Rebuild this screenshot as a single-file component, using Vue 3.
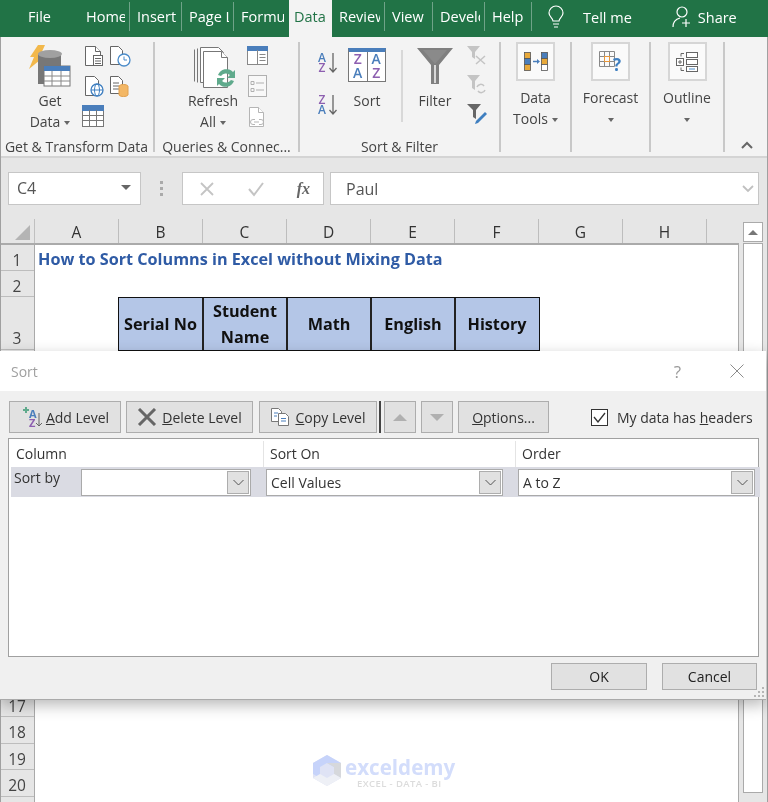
<script setup>
const tabs = [
  { label: 'File', width: 78, center: true },
  { label: 'Home', width: 52, sep: true },
  { label: 'Insert', width: 52, sep: true },
  { label: 'Page Layout', width: 52, sep: true },
  { label: 'Formulas', width: 55 },
  { label: 'Data', width: 43, active: true },
  { label: 'Review', width: 53, sep: true },
  { label: 'View', width: 48, sep: true },
  { label: 'Developer', width: 52, sep: true },
  { label: 'Help', width: 47, sep: true }
]
const columns = ['A', 'B', 'C', 'D', 'E', 'F', 'G', 'H']
const rows = Array.from({ length: 21 }, (_, i) => i + 1)
const headers = ['Serial No', 'Student Name', 'Math', 'English', 'History']
</script>

<template>
  <div class="excel">
    <!-- вкладки -->
    <div class="tabs">
      <div
        v-for="tab in tabs"
        :key="tab.label"
        class="tab"
        :class="{ active: tab.active, sep: tab.sep }"
        :style="{ width: tab.width + 'px' }"
      >
        <span>{{ tab.label }}</span>
      </div>
      <div class="tell">
        <svg width="16" height="24" viewBox="0 0 16 24" fill="none" stroke="#fff" stroke-width="1.2">
          <path d="M5 16c0-3-4-4-4-8a7 7 0 0 1 14 0c0 4-4 5-4 8z" />
          <path d="M5 19h6M6 22h4" />
        </svg>
        <span>Tell me</span>
      </div>
      <div class="share">
        <svg width="20" height="24" viewBox="0 0 20 24" fill="none" stroke="#fff" stroke-width="1.2">
          <circle cx="10" cy="7" r="5" />
          <path d="M1 22c0-5 3-8 7-9M14 14v8M10 18h8" />
        </svg>
        <span>Share</span>
      </div>
    </div>

    <!-- лента -->
    <div class="ribbon">
      <div class="group" style="width: 155px">
        <div class="group-body">
          <div class="big get-data">
            <svg width="46" height="46" viewBox="0 0 46 46">
              <path d="M12 1h7l-5 11h5L3 25l5-12H4z" fill="#f2b84b" />
              <path d="M12 10c3-3 20-3 23 0v30H12z" fill="#777" />
              <ellipse cx="24" cy="10" rx="12" ry="4" fill="#a0a0a0" />
              <rect x="18" y="22" width="26" height="20" fill="#fff" stroke="#777" />
              <rect x="18" y="22" width="26" height="5" fill="#4a7ebb" />
              <path d="M18 32h26M18 37h26M26 27v15M35 27v15" stroke="#888" fill="none" />
            </svg>
            <div class="big-text">Get</div>
            <div class="big-text">Data<i class="caret"></i></div>
          </div>
          <div class="small-grid first">
            <svg width="20" height="22" viewBox="0 0 20 22" fill="#fff" stroke="#666">
              <path d="M1.500 1.500h10l5 5v14h-15z" /><path d="M11.500 1.500v5h5" /><rect x="9.500" y="10.500" width="9" height="10" /><path d="M11 13.500h6M11 16h6M11 18.500h6" />
            </svg>
            <svg width="23" height="22" viewBox="0 0 23 22" fill="#fff" stroke="#666">
              <path d="M1.500 1.500h8l4 4v14h-12z" /><circle cx="15" cy="15" r="6" stroke="#4a8bc9" stroke-width="1.300" /><path d="M15 11.500V15h3" stroke="#4a8bc9" fill="none" />
            </svg>
            <svg width="20" height="22" viewBox="0 0 20 22" fill="#fff" stroke="#666">
              <path d="M1.500 1.500h9l4 4v15h-13z" /><circle cx="13" cy="15" r="6" stroke="#3f7fc0" stroke-width="1.300" /><ellipse cx="13" cy="15" rx="2.500" ry="6" stroke="#3f7fc0" fill="none" /><path d="M7 15h12" stroke="#3f7fc0" />
            </svg>
            <svg width="20" height="22" viewBox="0 0 20 22" fill="#fff" stroke="#666">
              <path d="M1.500 1.500h8l4 4v13h-12z" /><path d="M4 8h6M4 11h6M4 14h6" /><path d="M10 11c1-2 8-2 9 0v9c-1 2-8 2-9 0z" fill="#f3b765" stroke="#e0a050" />
            </svg>
            <svg class="wide-table" width="22" height="22" viewBox="0 0 22 22" fill="#fff" stroke="#777">
              <rect x=".5" y=".5" width="21" height="21" /><rect x=".5" y=".5" width="21" height="5" fill="#4a7ebb" stroke="#4a7ebb" /><path d="M.5 10.500h21M.5 15.500h21M7.500 5v17M14.500 5v17" fill="none" />
            </svg>
          </div>
        </div>
        <div class="group-label">Get &amp; Transform Data</div>
      </div>

      <div class="group" style="width: 145px">
        <div class="group-body">
          <div class="big refresh">
            <svg width="44" height="46" viewBox="0 0 44 46" fill="#fff" stroke="#777">
              <path d="M1.500 3.500v32M4.500 2.500v34" fill="none" />
              <path d="M7.500 1.500h18l5 5v30h-23z" />
              <path d="M10.500 5.500h18l6 6v30h-24z" />
              <path d="M28.500 5.500v6h6" />
              <path d="M25 29a9 9 0 0 1 15-3l2-2v8h-8l3-3a6 6 0 0 0-9 1zM41 35a9 9 0 0 1-15 3l-2 2v-8h8l-3 3a6 6 0 0 0 9-1z" fill="#5faa8c" stroke="none" />
            </svg>
            <div class="big-text">Refresh</div>
            <div class="big-text">All<i class="caret"></i></div>
          </div>
          <div class="small-col">
            <svg width="21" height="20" viewBox="0 0 21 20" fill="#fff" stroke="#888">
              <rect x=".5" y=".5" width="20" height="18" /><rect x=".5" y=".5" width="20" height="4" fill="#4a7ebb" stroke="#4a7ebb" /><path d="M12.500 8.500h6M12.500 11.500h6M12.500 14.500h6M10.500 4v15" fill="none" />
            </svg>
            <svg width="19" height="22" viewBox="0 0 19 22" fill="#f8f8f8" stroke="#b0b0b0">
              <rect x=".5" y=".5" width="18" height="21" /><path d="M3 6.500h3v3H3zM3 13.500h3v3H3zM8 8h8M8 15h8" />
            </svg>
            <svg width="19" height="22" viewBox="0 0 19 22" fill="#fff" stroke="#b5b5b5">
              <path d="M1.500 1.500h9l5 5v14h-14z" /><path d="M10.500 1.500v5h5" /><path d="M6 16h5M7 13.500H5a2.500 2.500 0 0 0 0 5h2M11 13.500h2a2.500 2.500 0 0 1 0 5h-2" fill="none" />
            </svg>
          </div>
        </div>
        <div class="group-label">Queries &amp; Connec...</div>
      </div>

      <div class="group" style="width: 201px">
        <div class="group-body sort-body">
          <div class="sort-small">
            <div class="az">
              <div class="az-letters"><span class="blue">A</span><span class="purple">Z</span></div>
              <svg width="8" height="20" viewBox="0 0 8 20" fill="none" stroke="#666" stroke-width="1.300">
                <path d="M4 0v19M.5 15L4 19l3.500-4" />
              </svg>
            </div>
            <div class="az">
              <div class="az-letters"><span class="purple">Z</span><span class="blue">A</span></div>
              <svg width="8" height="20" viewBox="0 0 8 20" fill="none" stroke="#666" stroke-width="1.300">
                <path d="M4 0v19M.5 15L4 19l3.500-4" />
              </svg>
            </div>
          </div>
          <div class="big sort-big">
            <div class="sort-icon">
              <div class="sort-cell"><span class="purple">Z</span><span class="blue">A</span></div>
              <div class="sort-cell"><span class="blue">A</span><span class="purple">Z</span></div>
            </div>
            <div class="big-text">Sort</div>
          </div>
          <div class="inner-sep"></div>
          <div class="big filter-big">
            <svg width="36" height="38" viewBox="0 0 36 38">
              <path d="M0 1h36L22 18v19h-8V18z" fill="#7f7f7f" />
              <path d="M17 18h2v18h-2z" fill="#d8d8d8" />
              <path d="M6 3h24L18 17z" fill="#8a8a8a" />
            </svg>
            <div class="big-text">Filter</div>
          </div>
          <div class="small-col filter-col">
            <svg width="20" height="20" viewBox="0 0 20 20">
              <path d="M0 0h13L8 6v7L5 11V6z" fill="#c4c4c4" /><path d="M9 10l9 8M18 10l-9 8" stroke="#c4c4c4" stroke-width="1.500" />
            </svg>
            <svg width="20" height="20" viewBox="0 0 20 20">
              <path d="M0 0h13L8 6v9L5 13V6z" fill="#c4c4c4" /><path d="M10 12a4 4 0 0 1 7-1M18 15a4 4 0 0 1-7 1" stroke="#c4c4c4" stroke-width="1.500" fill="none" />
            </svg>
            <svg width="20" height="20" viewBox="0 0 20 20">
              <path d="M0 0h14L9 6v9L6 13V6z" fill="#666" /><path d="M18 8l2 2-9 9-3 1 1-3z" fill="#3f7fc0" />
            </svg>
          </div>
        </div>
        <div class="group-label">Sort &amp; Filter</div>
      </div>

      <div class="group" style="width: 71px">
        <div class="boxed">
          <div class="icon-box">
            <svg width="24" height="20" viewBox="0 0 24 20" stroke="#555" stroke-width=".8">
              <rect x=".5" y=".5" width="6" height="6" fill="#e8a93a" /><rect x=".5" y="6.500" width="6" height="6" fill="#4a7ebb" /><rect x=".5" y="12.500" width="6" height="6" fill="#e8a93a" />
              <rect x="17.500" y=".5" width="6" height="6" fill="#4a7ebb" /><rect x="17.500" y="6.500" width="6" height="6" fill="#e8a93a" /><rect x="17.500" y="12.500" width="6" height="6" fill="#fff" />
              <path d="M9 9.500h5" stroke="#4a7ebb" stroke-width="1.500" /><path d="M13 7l3 2.500-3 2.500z" fill="#4a7ebb" stroke="none" />
            </svg>
          </div>
          <div class="big-text">Data</div>
          <div class="big-text">Tools<i class="caret"></i></div>
        </div>
      </div>

      <div class="group" style="width: 79px">
        <div class="boxed">
          <div class="icon-box">
            <svg width="24" height="22" viewBox="0 0 24 22" fill="none">
              <path d="M.5.500h15v15H.5zM5.500.5v15M10.500.5v15M.5 5.500h15M.5 10.500h15" stroke="#888" />
              <rect x="5.500" y="5.500" width="5" height="5" stroke="#e8973a" />
              <text x="14" y="20" class="q-mark">?</text>
            </svg>
          </div>
          <div class="big-text">Forecast</div>
          <div class="big-text"><i class="caret alone"></i></div>
        </div>
      </div>

      <div class="group" style="width: 74px">
        <div class="boxed">
          <div class="icon-box">
            <svg width="22" height="20" viewBox="0 0 22 20" fill="#fff" stroke="#666">
              <rect x=".5" y="6.500" width="7" height="7" /><path d="M2 10h4M4 8v4" /><path d="M8 1.500H5v3M8 18.500H5v-3" fill="none" />
              <rect x="10.500" y=".5" width="11" height="5" /><rect x="10.500" y="7.500" width="11" height="5" /><rect x="10.500" y="14.500" width="11" height="5" /><path d="M13 17h6" stroke="#4a8bc9" />
            </svg>
          </div>
          <div class="big-text">Outline</div>
          <div class="big-text"><i class="caret alone"></i></div>
        </div>
      </div>

      <div class="collapse">
        <svg width="12" height="8" viewBox="0 0 12 8" fill="none" stroke="#666" stroke-width="2">
          <path d="M1 7l5-5 5 5" />
        </svg>
      </div>
    </div>

    <!-- строка формул -->
    <div class="formula-row">
      <div class="name-box">
        <span>C4</span>
        <i class="caret dark"></i>
      </div>
      <div class="dots"><i></i><i></i><i></i></div>
      <div class="fx-box">
        <svg width="16" height="16" viewBox="0 0 16 16" fill="none" stroke="#c4c4c4" stroke-width="1.800">
          <path d="M2 2l12 12M14 2L2 14" />
        </svg>
        <svg width="18" height="16" viewBox="0 0 18 16" fill="none" stroke="#c4c4c4" stroke-width="2">
          <path d="M2 8l5 6L16 2" />
        </svg>
        <span class="fx">fx</span>
      </div>
      <div class="formula-input">
        <span>Paul</span>
        <svg width="12" height="8" viewBox="0 0 12 8" fill="none" stroke="#c0c0c0" stroke-width="1.800">
          <path d="M1 1l5 5 5-5" />
        </svg>
      </div>
    </div>

    <!-- лист -->
    <div class="sheet">
      <div class="sheet-main">
        <div class="col-heads">
          <div class="corner"><i></i></div>
          <div v-for="col in columns" :key="col" class="col-head">{{ col }}</div>
        </div>
        <div class="sheet-body">
          <div class="row-heads">
            <div v-for="r in rows" :key="r" class="row-head" :class="'r' + r">{{ r }}</div>
          </div>
          <div class="cells">
            <div class="title">How to Sort Columns in Excel without Mixing Data</div>
            <div class="data-head">
              <div v-for="h in headers" :key="h" class="data-cell">{{ h }}</div>
            </div>
          </div>
        </div>
      </div>
      <div class="scrollbar">
        <div class="scroll-up"><i></i></div>
        <div class="scroll-thumb"></div>
      </div>
    </div>

    <!-- водяной знак -->
    <div class="watermark">
      <svg width="28" height="31" viewBox="0 0 28 31">
        <path d="M14 0l14 8v15l-14 8L0 23V8z" fill="#dfe3f5" />
        <path d="M0 8l14-8 14 8-7 4-7-4-7 4v11l-7-4z" fill="#c6d3fa" />
        <path d="M14 8l14 0v15l-7-4v-7z" fill="#d6d8dc" />
        <path d="M0 23l7-4 7 4 7-4 7 4-14 8z" fill="#eef0f6" />
      </svg>
      <div>
        <div class="wm-name">exceldemy</div>
        <div class="wm-sub">EXCEL - DATA - BI</div>
      </div>
    </div>

    <!-- диалог -->
    <div class="dialog">
      <div class="dialog-title">
        <span class="dialog-name">Sort</span>
        <span class="help">?</span>
        <svg width="14" height="14" viewBox="0 0 14 14" fill="none" stroke="#8c8c8c" stroke-width="1">
          <path d="M.5.5l13 13M13.500.5l-13 13" />
        </svg>
      </div>

      <div class="dialog-tools">
        <button class="btn add">
          <svg width="22" height="22" viewBox="0 0 22 22">
            <path d="M2 4h6M5 1v6" stroke="#5faa8c" stroke-width="2" />
            <text x="8" y="12" class="mini blue-fill">A</text>
            <text x="8" y="21" class="mini purple-fill">Z</text>
            <path d="M18 7v13M15 17l3 3 3-3" stroke="#666" fill="none" />
          </svg>
          <span><u>A</u>dd Level</span>
        </button>
        <button class="btn del">
          <svg width="20" height="18" viewBox="0 0 20 18" fill="none" stroke="#666" stroke-width="3">
            <path d="M2 1l16 16M18 1L2 17" />
          </svg>
          <span><u>D</u>elete Level</span>
        </button>
        <button class="btn copy">
          <svg width="20" height="18" viewBox="0 0 20 18" fill="#fff" stroke="#777">
            <path d="M1.500.5h7l3 3v10h-10z" />
            <path d="M8.500 5.500h7l3 3v9h-10z" />
            <path d="M4 5h4M4 8h3M11 10.500h5M11 13h5" stroke="#4a7ebb" />
          </svg>
          <span><u>C</u>opy Level</span>
        </button>
        <div class="tool-sep"></div>
        <button class="btn arrow"><i class="tri up"></i></button>
        <button class="btn arrow"><i class="tri down"></i></button>
        <button class="btn options"><span><u>O</u>ptions...</span></button>
        <div class="headers-check">
          <span class="checkbox">
            <svg width="13" height="11" viewBox="0 0 13 11" fill="none" stroke="#333" stroke-width="1.300">
              <path d="M1 5l4 5 7-9" />
            </svg>
          </span>
          <span>My data has <u>h</u>eaders</span>
        </div>
      </div>

      <div class="levels">
        <div class="levels-head">
          <div class="lh first-col">Column</div>
          <div class="lh">Sort On</div>
          <div class="lh last-col">Order</div>
        </div>
        <div class="level-row">
          <div class="sort-by">Sort by</div>
          <div class="combo c1"><span></span><i class="combo-btn"><svg width="11" height="7" viewBox="0 0 11 7" fill="none" stroke="#555"><path d="M.5 1l5 5 5-5" /></svg></i></div>
          <div class="combo c2"><span>Cell Values</span><i class="combo-btn"><svg width="11" height="7" viewBox="0 0 11 7" fill="none" stroke="#555"><path d="M.5 1l5 5 5-5" /></svg></i></div>
          <div class="combo c3"><span>A to Z</span><i class="combo-btn"><svg width="11" height="7" viewBox="0 0 11 7" fill="none" stroke="#555"><path d="M.5 1l5 5 5-5" /></svg></i></div>
        </div>
      </div>

      <div class="dialog-foot">
        <button class="btn foot-btn">OK</button>
        <button class="btn foot-btn">Cancel</button>
      </div>
      <div class="grip">
        <svg width="12" height="12" viewBox="0 0 12 12" fill="#b5b5b5">
          <rect x="9" y="0" width="2" height="2" /><rect x="5" y="4" width="2" height="2" /><rect x="9" y="4" width="2" height="2" />
          <rect x="1" y="8" width="2" height="2" /><rect x="5" y="8" width="2" height="2" /><rect x="9" y="8" width="2" height="2" />
        </svg>
      </div>
    </div>
  </div>
</template>

<style>
html,
body {
  margin: 0;
  overflow: hidden;
}
</style>

<style scoped>
.excel {
  position: relative;
  width: 768px;
  height: 802px;
  overflow: hidden;
  font-family: "Open Sans", "Liberation Sans", sans-serif;
  font-size: 14px;
  color: #444;
  background: #e6e6e6;
  filter: blur(0.3px);
}

/* край окна */
.excel::before,
.excel::after {
  content: "";
  position: absolute;
  top: 37px;
  bottom: 0;
  width: 1px;
  background: #a0a0a0;
  z-index: 1;
}

.excel::before {
  left: 0;
}

.excel::after {
  right: 0;
}

/* Вкладки */
.tabs {
  display: flex;
  height: 37px;
  background: #217346;
  color: #fff;
  font-size: 14.500px;
}

.tab {
  flex-shrink: 0;
  box-sizing: border-box;
  height: 37px;
  line-height: 34px;
  white-space: nowrap;
  overflow: hidden;
  position: relative;
  padding-left: 7px;
}

.tab:first-child {
  padding-left: 28px;
}

.tab:nth-child(2) {
  padding-left: 8px;
}

.tab > span {
  display: block;
  overflow: hidden;
  width: calc(100% - 5px);
}

.tab.sep::after {
  content: "";
  position: absolute;
  right: 0;
  top: 2px;
  height: 29px;
  width: 1px;
  background: #6fa388;
}

.tab.active {
  background: #f3f3f3;
  color: #217346;
  padding-left: 5px;
}

.tell {
  display: flex;
  align-items: center;
  gap: 19px;
  margin-left: 16px;
  padding-bottom: 3px;
}

.share {
  display: flex;
  align-items: center;
  gap: 6px;
  margin-left: 40px;
  padding-bottom: 3px;
}

/* Лента */
.ribbon {
  display: flex;
  box-sizing: border-box;
  height: 121px;
  padding-top: 5px;
  background: #f3f3f3;
  border-bottom: 2px solid #d4d4d4;
}

.group {
  box-sizing: border-box;
  flex-shrink: 0;
  height: 110px;
  display: flex;
  flex-direction: column;
  border-right: 2px solid #c8c8c8;
  text-align: center;
}

.group-body {
  display: flex;
  height: 95px;
}

.group-label {
  height: 15px;
  line-height: 19px;
  white-space: nowrap;
  font-size: 14px;
}

.big {
  display: flex;
  flex-direction: column;
  align-items: center;
  flex-shrink: 0;
}

.big-text {
  height: 21px;
  line-height: 21px;
  white-space: nowrap;
}

.get-data {
  width: 60px;
  margin-left: 20px;
  padding-top: 2px;
}

.get-data svg {
  margin-left: -2px;
}

.small-grid {
  display: grid;
  grid-template-columns: 25px 25px;
  grid-auto-rows: 30px;
  justify-items: start;
  padding-top: 3px;
  margin-left: 4px;
}

.wide-table {
  margin-left: -2px;
}

.refresh {
  width: 60px;
  margin-left: 28px;
  padding-top: 4px;
}

.refresh svg {
  margin: 0 0 -2px 4px;
}

.small-col {
  display: flex;
  flex-direction: column;
  gap: 9px;
  margin-left: 4px;
  padding-top: 4px;
  align-items: center;
}

.sort-small {
  display: flex;
  flex-direction: column;
  gap: 22px;
  margin-left: 17px;
  padding-top: 11px;
}

.az {
  display: flex;
  gap: 2px;
  width: 20px;
  height: 20px;
}

.az-letters {
  display: flex;
  flex-direction: column;
  width: 10px;
  font-size: 12px;
  line-height: 10px;
  font-weight: 600;
  text-align: center;
}

.blue {
  color: #4a7ebb;
}

.purple {
  color: #8d5fb0;
}

.sort-big {
  width: 38px;
  margin-left: 11px;
  padding-top: 6px;
}

.sort-icon {
  box-sizing: border-box;
  width: 38px;
  height: 34px;
  display: flex;
  background: #fff;
  border: 1px solid #777;
  border-top: 4px solid #4a7ebb;
  margin-bottom: 8px;
}

.sort-cell {
  flex: 1;
  display: flex;
  flex-direction: column;
  align-items: center;
  font-size: 14px;
  line-height: 14px;
  font-weight: 600;
}

.sort-cell + .sort-cell {
  border-left: 1px solid #777;
}

.inner-sep {
  width: 2px;
  height: 72px;
  margin: 8px 0 0 15px;
  background: #d8d8d8;
}

.filter-big {
  width: 38px;
  margin-left: 13px;
  padding-top: 5px;
}

.filter-big svg {
  margin-bottom: 5px;
}

.filter-col {
  margin-left: 13px;
}

.boxed {
  display: flex;
  flex-direction: column;
  align-items: center;
}

.icon-box {
  box-sizing: border-box;
  width: 39px;
  height: 39px;
  margin-bottom: 6px;
  border: 2px solid #d6d6d6;
  background: #fafafa;
  display: flex;
  align-items: center;
  justify-content: center;
}

.q-mark {
  font-size: 17px;
  font-weight: 700;
  fill: #3f7fc0;
  font-family: "Open Sans", sans-serif;
}

.caret {
  display: inline-block;
  width: 0;
  height: 0;
  margin-left: 4px;
  vertical-align: middle;
  border-left: 3.500px solid transparent;
  border-right: 3.500px solid transparent;
  border-top: 4px solid #666;
}

.caret.alone {
  margin-left: 0;
}

.caret.dark {
  border-left-width: 5px;
  border-right-width: 5px;
  border-top-width: 5px;
}

.collapse {
  flex: 1;
  display: flex;
  justify-content: center;
  align-items: flex-end;
  height: 107px;
}

/* Строка формул */
.formula-row {
  display: flex;
  align-items: center;
  height: 61px;
  padding: 0 9px 0 8px;
  box-sizing: border-box;
  background: #e6e6e6;
  color: #555;
}

.name-box {
  box-sizing: border-box;
  width: 133px;
  height: 33px;
  background: #fff;
  border: 1px solid #c6c6c6;
  display: flex;
  align-items: center;
  justify-content: space-between;
  padding: 0 9px 1px 8px;
  font-size: 16px;
}

.name-box .caret {
  margin-bottom: 2px;
}

.dots {
  width: 41px;
  display: flex;
  flex-direction: column;
  align-items: center;
  gap: 3px;
}

.dots i {
  width: 3px;
  height: 3px;
  background: #aaa;
}

.fx-box {
  box-sizing: border-box;
  width: 142px;
  height: 33px;
  background: #fff;
  border: 1px solid #c6c6c6;
  display: flex;
  align-items: center;
  justify-content: space-between;
  padding: 0 13px 0 16px;
}

.fx {
  font-family: "Liberation Serif", serif;
  font-style: italic;
  font-weight: 700;
  font-size: 16px;
  color: #666;
}

.formula-input {
  box-sizing: border-box;
  flex: 1;
  height: 33px;
  margin-left: 6px;
  background: #fff;
  border: 1px solid #c6c6c6;
  display: flex;
  align-items: center;
  justify-content: space-between;
  padding: 0 4px 0 15px;
  font-size: 16px;
}

/* Лист */
.sheet {
  display: flex;
  height: 584px;
}

.sheet-main {
  width: 739px;
  flex-shrink: 0;
}

.col-heads {
  display: flex;
  height: 26px;
  box-sizing: border-box;
  border-bottom: 2px solid #aaa;
}

.corner {
  width: 35px;
  position: relative;
  border-right: 1px solid #c0c0c0;
  box-sizing: border-box;
}

.corner i {
  position: absolute;
  right: 4px;
  bottom: 3px;
  width: 0;
  height: 0;
  border-left: 15px solid transparent;
  border-bottom: 15px solid #b4b4b4;
}

.col-head {
  box-sizing: border-box;
  width: 84px;
  text-align: center;
  line-height: 27px;
  border-right: 1px solid #bdbdbd;
  color: #333;
  font-size: 15.500px;
}

.sheet-body {
  display: flex;
  box-sizing: border-box;
  height: 558px;
  overflow: hidden;
  border-right: 1px solid #aaa;
}

.row-heads {
  width: 35px;
  flex-shrink: 0;
  background: #e6e6e6;
  border-right: 1px solid #aaa;
  box-sizing: border-box;
}

.row-head {
  box-sizing: border-box;
  height: 26.500px;
  line-height: 30px;
  text-align: center;
  border-bottom: 1px solid #bdbdbd;
  color: #444;
  font-size: 15.500px;
}

.r1,
.r2 {
  height: 26px;
}

.r3 {
  height: 53px;
  line-height: 82px;
}

.r4,
.r5,
.r6,
.r7,
.r8,
.r9,
.r10,
.r11,
.r12,
.r13,
.r14,
.r15,
.r16 {
  height: 26.230px;
}

.cells {
  flex: 1;
  background: #fff;
}

.title {
  height: 52px;
  padding-left: 3px;
  line-height: 29px;
  font-weight: 700;
  font-size: 16.200px;
  color: #2f5ba5;
  white-space: nowrap;
}

.data-head {
  display: flex;
  margin-left: 83px;
  height: 54px;
  box-sizing: border-box;
  border: 1px solid #111;
  width: 422px;
  background: #b4c6e7;
}

.data-cell {
  box-sizing: border-box;
  width: 84px;
  display: flex;
  align-items: center;
  justify-content: center;
  text-align: center;
  font-weight: 700;
  font-size: 16.200px;
  line-height: 26px;
  color: #111;
  padding: 0 8px;
  border-left: 2px solid #222;
}

.data-cell:first-child {
  width: 83px;
  padding: 0;
  border-left: 0;
}

.scrollbar {
  flex: 1;
  box-sizing: border-box;
  padding: 3px 5px 0 4px;
}

.scroll-up {
  box-sizing: border-box;
  height: 20px;
  background: #fff;
  border: 1px solid #aaa;
  display: flex;
  align-items: center;
  justify-content: center;
}

.scroll-up i {
  width: 0;
  height: 0;
  border-left: 5px solid transparent;
  border-right: 5px solid transparent;
  border-bottom: 5px solid #777;
}

.scroll-thumb {
  box-sizing: border-box;
  height: 550px;
  margin-top: 1px;
  background: #fff;
  border: 1px solid #aaa;
}

/* Водяной знак */
.watermark {
  position: absolute;
  left: 313px;
  top: 755px;
  display: flex;
  gap: 4px;
}

.wm-name {
  font-size: 20.600px;
  line-height: 24px;
  font-weight: 700;
  color: #d3ddfb;
  font-family: "Open Sans", sans-serif;
}

.wm-sub {
  margin-left: 12px;
  font-size: 9.500px;
  line-height: 10px;
  font-weight: 600;
  letter-spacing: 0.4px;
  color: #dcdcdc;
  white-space: nowrap;
}

/* Диалог */
.dialog {
  position: absolute;
  left: 0;
  top: 351px;
  z-index: 2;
  width: 766px;
  height: 349px;
  background: #f0f0f0;
  border-bottom: 1px solid #aaa;
  box-sizing: border-box;
  box-shadow: 0 5px 14px rgba(0, 0, 0, 0.28);
  display: flex;
  flex-direction: column;
  color: #333;
}

.dialog-title {
  display: flex;
  align-items: center;
  height: 40px;
  flex-shrink: 0;
  background: #fff;
  padding: 0 22px 0 11px;
}

.dialog-name {
  flex: 1;
  color: #a0a0a0;
}

.help {
  margin-right: 49px;
  font-size: 17px;
  color: #999;
}

.dialog-tools {
  display: flex;
  align-items: center;
  height: 32px;
  margin-top: 10px;
  padding-left: 9px;
}

.btn {
  box-sizing: border-box;
  height: 32px;
  padding: 0;
  display: flex;
  align-items: center;
  justify-content: center;
  gap: 5px;
  background: #e1e1e1;
  border: 1px solid #adadad;
  font-family: inherit;
  font-size: 14px;
  color: #333;
}

.add {
  width: 112px;
}

.add span {
  margin-left: -2px;
}

.del {
  width: 127px;
  margin-left: 5px;
}

.copy {
  width: 118px;
  margin-left: 6px;
}

.tool-sep {
  width: 2px;
  height: 32px;
  margin: 0 3px 0 2px;
  background: #444;
}

.arrow {
  width: 32px;
  margin-right: 5px;
}

.options {
  width: 91px;
}

.tri {
  width: 0;
  height: 0;
  border-left: 7px solid transparent;
  border-right: 7px solid transparent;
}

.tri.up {
  border-bottom: 7px solid #b0b0b0;
}

.tri.down {
  border-top: 7px solid #b0b0b0;
}

.headers-check {
  display: flex;
  align-items: center;
  gap: 9px;
  margin-left: 42px;
  white-space: nowrap;
}

.checkbox {
  box-sizing: border-box;
  width: 17px;
  height: 17px;
  background: #fff;
  border: 1px solid #333;
  display: flex;
  align-items: center;
  justify-content: center;
}

.levels {
  box-sizing: border-box;
  width: 751px;
  height: 219px;
  margin: 5px 0 0 8px;
  padding: 2px;
  background: #fff;
  border: 1px solid #a0a0a0;
}

.levels-head {
  display: flex;
  height: 26px;
}

.lh {
  box-sizing: border-box;
  flex: 0 0 252px;
  line-height: 26px;
  padding-left: 6px;
  border-left: 1px solid #e4e4e4;
}

.first-col {
  padding-left: 5px;
  border-left: 0;
}

.last-col {
  flex: 1 1 auto;
}

.level-row {
  display: flex;
  align-items: center;
  height: 30px;
  background: #dadbe3;
  padding-left: 3px;
  width: 746px;
}

.sort-by {
  width: 67px;
  flex-shrink: 0;
  height: 26px;
  line-height: 18px;
}

.combo {
  box-sizing: border-box;
  height: 27px;
  background: #fff;
  border: 1px solid #aaa;
  display: flex;
  align-items: center;
  justify-content: space-between;
  padding: 0 1px 0 4px;
}

.c1 {
  width: 170px;
  margin-right: 15px;
}

.c2 {
  width: 237px;
  margin-right: 15px;
}

.c3 {
  width: 237px;
}

.combo-btn {
  box-sizing: border-box;
  width: 22px;
  height: 23px;
  background: #e1e1e1;
  border: 1px solid #adadad;
  display: flex;
  align-items: center;
  justify-content: center;
}

.dialog-foot {
  display: flex;
  justify-content: flex-end;
  gap: 15px;
  padding: 6px 9px 0 0;
}

.foot-btn {
  width: 96px;
  height: 27px;
  color: #222;
}

.foot-btn:last-child {
  width: 95px;
}

.grip {
  position: absolute;
  right: 1px;
  bottom: 0;
  line-height: 0;
}

.mini {
  font-size: 11px;
  font-weight: 700;
  font-family: "Open Sans", sans-serif;
}

.blue-fill {
  fill: #4a7ebb;
}

.purple-fill {
  fill: #8d5fb0;
}
</style>
